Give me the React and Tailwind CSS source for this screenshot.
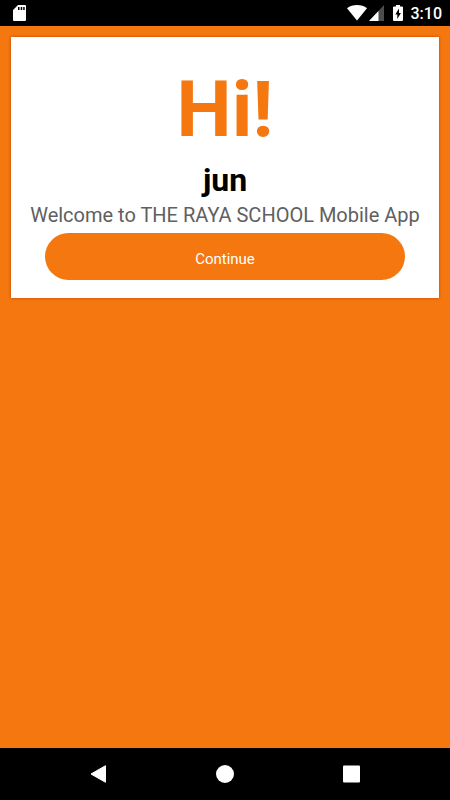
function StatusBar() {
	return (
		<header className="flex h-[26px] shrink-0 items-center justify-between bg-black pr-2 pl-[13px] text-white">
			<svg width="13" height="16" viewBox="0 0 13 16" aria-hidden="true">
				<path
					fill="currentColor"
					fillRule="evenodd"
					d="M5 0h7a1 1 0 0 1 1 1v14a1 1 0 0 1-1 1H1a1 1 0 0 1-1-1V5zM5 2v3h1.500V2zM7.700 2v3h1.500V2zM10.200 2v3h1.500V2z"
				/>
			</svg>
			<div className="flex items-center">
				<svg width="20" height="16" viewBox="0 0 20 16" aria-hidden="true">
					<path fill="currentColor" d="M10 15.500L0 3.200C2.800 1 6.200 0 10 0s7.200 1 10 3.200z" />
				</svg>
				<svg className="ml-0.5" width="15" height="16" viewBox="0 0 15 16" aria-hidden="true">
					<path fill="#4d4d4d" d="M15 0v16H0z" />
					<path fill="currentColor" d="M9.500 6v10H0z" />
				</svg>
				<svg className="ml-[9px]" width="10" height="16" viewBox="0 0 10 16" aria-hidden="true">
					<path
						fill="currentColor"
						fillRule="evenodd"
						d="M3 0h4v1.600h2a1 1 0 0 1 1 1V15a1 1 0 0 1-1 1H1a1 1 0 0 1-1-1V2.600a1 1 0 0 1 1-1h2zM6 3.500L2.300 9.500h2v4.500L7.900 8H6z"
					/>
				</svg>
				<span className="ml-2 pt-0.5 text-base leading-6 font-medium">3:10</span>
			</div>
		</header>
	);
}

function NavBar() {
	return (
		<nav className="grid h-[52px] shrink-0 grid-cols-3 bg-black px-9 text-white">
			<button type="button" aria-label="Back" className="flex items-center justify-center">
				<svg width="18" height="18" viewBox="0 0 18 18" aria-hidden="true">
					<path
						fill="currentColor"
						stroke="currentColor"
						strokeLinejoin="round"
						d="M15.500 .7v16.600L1 9z"
					/>
				</svg>
			</button>
			<button type="button" aria-label="Home" className="flex items-center justify-center">
				<svg width="18" height="18" viewBox="0 0 18 18" aria-hidden="true">
					<circle cx="9" cy="9" r="9" fill="currentColor" />
				</svg>
			</button>
			<button type="button" aria-label="Overview" className="flex items-center justify-center">
				<svg width="18" height="18" viewBox="0 0 18 18" aria-hidden="true">
					<rect x="1" y=".5" width="17" height="17" rx="1" fill="currentColor" />
				</svg>
			</button>
		</nav>
	);
}

export default function App() {
	return (
		<div className="flex min-h-screen flex-col bg-[#f5770f] font-[Roboto,sans-serif]">
			<StatusBar />
			<main className="grow px-[11px] pt-[11px]">
				<section className="bg-white px-4 pt-[33px] pb-[18px] text-center shadow-[0_0_3px_rgba(150,40,0,0.6)]">
					<h1 className="text-[78px] leading-[80px] font-bold text-[#f5770f]">Hi!</h1>
					<h2 className="mt-2.5 text-[32px] leading-10 font-bold text-black">jun</h2>
					<p className="mt-px text-xl leading-7 text-[#606060]">
						Welcome to THE RAYA SCHOOL Mobile App
					</p>
					<div className="mt-1 px-[18px]">
						<button
							type="button"
							className="h-[47px] w-full rounded-full bg-[#f5770f] pt-1 text-[15px] leading-5 text-white"
						>
							Continue
						</button>
					</div>
				</section>
			</main>
			<NavBar />
		</div>
	);
}
